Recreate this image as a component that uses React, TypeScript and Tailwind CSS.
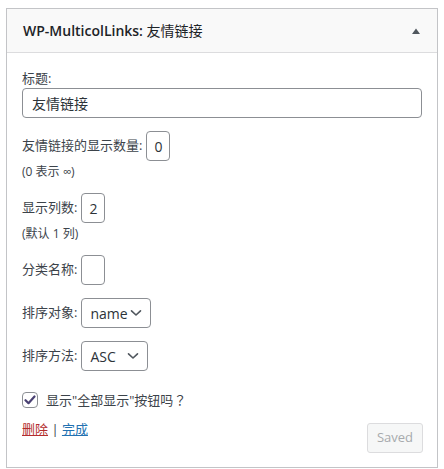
import React from "react";

const font = { fontFamily: '"Open Sans", "Noto Sans CJK SC", sans-serif' };

function Chevron() {
  return (
    <svg width="12" height="8" viewBox="0 0 12 8" className="shrink-0">
      <path d="M1.5 1.8 L6 6 L10.5 1.8" fill="none" stroke="#50575e" strokeWidth="1.6" strokeLinecap="round" strokeLinejoin="round" />
    </svg>
  );
}

export default function App() {
  return (
    <div className="w-[444px] h-[469px] bg-white pt-[8px] pl-[6px]" style={font}>
      <div className="w-[432px] border border-[#c3c4c7] bg-white text-[13px] text-[#3c434a]">
        <div className="h-[44px] bg-[#f9f9f9] border-b border-[#dcdcde] flex items-center justify-between pl-[16px] pr-[16px]">
          <span className="text-[14px] text-[#1d2327] leading-none">
            <span className="font-semibold">WP-MulticolLinks:</span> 友情链接
          </span>
          <svg width="8" height="6" viewBox="0 0 8 6" className="mr-[1px]">
            <path d="M0 6 L4 0.5 L8 6 Z" fill="#50575e" />
          </svg>
        </div>
        <div className="pl-[15px] pr-[14px] pt-[16px] pb-[14px]">
          <div className="leading-[19px]">标题:</div>
          <div className="h-[30px] w-[400px] border border-[#8c8f94] rounded-[4px] flex items-center px-[9px] text-[14px] text-[#2c3338]">友情链接</div>

          <div className="mt-[13px] flex items-center gap-[4px]">
            <span>友情链接的显示数量:</span>
            <div className="h-[30px] w-[24px] border border-[#8c8f94] rounded-[4px] flex items-center justify-center text-[14px] text-[#2c3338]">0</div>
          </div>
          <div className="mt-[2px] text-[12px] leading-[18px]">(0 表示 ∞)</div>

          <div className="mt-[12px] flex items-center gap-[4px]">
            <span>显示列数:</span>
            <div className="h-[30px] w-[24px] border border-[#8c8f94] rounded-[4px] flex items-center justify-center text-[14px] text-[#2c3338]">2</div>
          </div>
          <div className="mt-[2px] text-[12px] leading-[18px]">(默认 1 列)</div>

          <div className="mt-[12px] flex items-center gap-[4px]">
            <span>分类名称:</span>
            <div className="h-[30px] w-[24px] border border-[#8c8f94] rounded-[4px]"></div>
          </div>

          <div className="mt-[13px] flex items-center gap-[4px]">
            <span>排序对象:</span>
            <div className="h-[30px] w-[70px] border border-[#8c8f94] rounded-[4px] flex items-center justify-between pl-[8px] pr-[8px] text-[14px] text-[#2c3338]">
              <span>name</span>
              <Chevron />
            </div>
          </div>

          <div className="mt-[13px] flex items-center gap-[4px]">
            <span>排序方法:</span>
            <div className="h-[30px] w-[67px] border border-[#8c8f94] rounded-[4px] flex items-center justify-between pl-[8px] pr-[8px] text-[14px] text-[#2c3338]">
              <span>ASC</span>
              <Chevron />
            </div>
          </div>

          <div className="mt-[19px] flex items-center gap-[8px] leading-[19px]">
            <div className="w-[16px] h-[16px] border border-[#8c8f94] rounded-[4px] flex items-center justify-center">
              <svg width="12" height="10" viewBox="0 0 12 10">
                <path d="M1.5 5.2 L4.5 8.2 L10.5 1.5" fill="none" stroke="#4a4173" strokeWidth="2.2" strokeLinecap="round" strokeLinejoin="round" />
              </svg>
            </div>
            <span>
              显示"全部显示"按钮吗
              <span style={{ fontFamily: '"Noto Sans CJK TC", sans-serif' }}>？</span>
            </span>
          </div>

          <div className="mt-[13px] flex items-start justify-between">
            <div className="leading-[19px] -mt-[3px]">
              <a className="text-[#b32d2e] underline">删除</a>
              <span className="text-[#3c434a]"> | </span>
              <a className="text-[#2271b1] underline">完成</a>
            </div>
            <div className="h-[30px] w-[56px] border border-[#dcdcde] bg-[#f6f7f7] rounded-[3px] flex items-center justify-center text-[#a7aaad]">Saved</div>
          </div>
        </div>
      </div>
    </div>
  );
}
